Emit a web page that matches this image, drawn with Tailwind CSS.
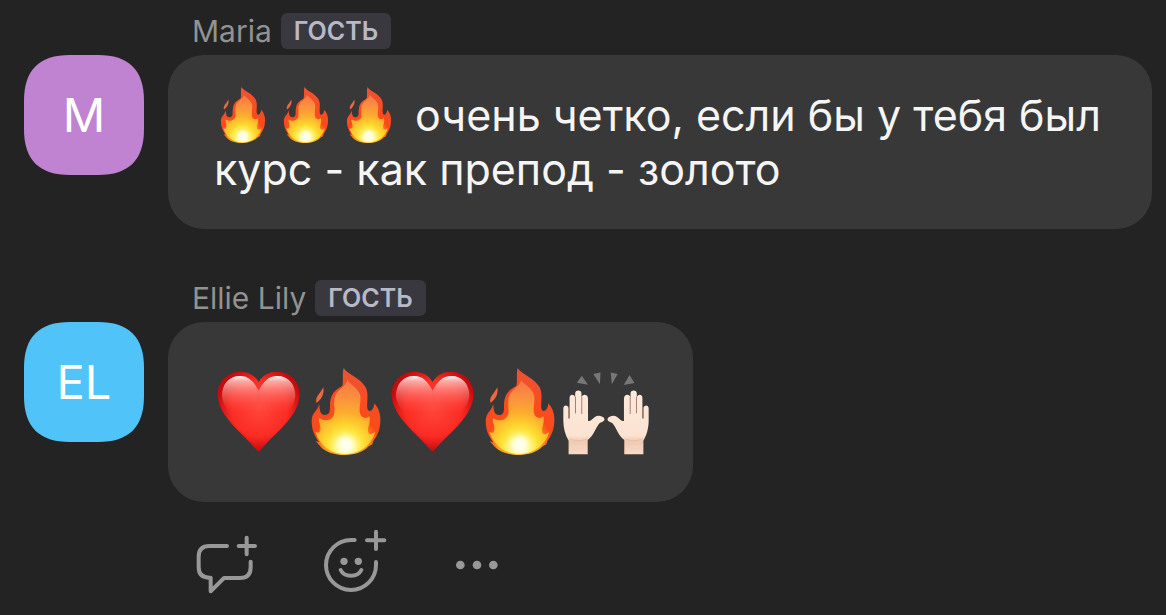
<!DOCTYPE html>
<html lang="ru">
<head>
    <meta charset="UTF-8">
    <meta name="viewport" content="width=device-width, initial-scale=1.0">
    <title>Чат</title>
    <script src="https://cdn.jsdelivr.net/npm/@tailwindcss/browser@4"></script>
</head>
<body class="bg-[#232323] min-h-screen font-[Inter,'Liberation_Sans',sans-serif] text-[#f5f5f5]">

    <!-- Emoji -->
    <svg class="absolute w-0 h-0" aria-hidden="true">
        <defs>
            <radialGradient id="flameOuter" gradientUnits="userSpaceOnUse" cx="437" cy="285" r="220">
                <stop offset="0" stop-color="#ffd83a"/>
                <stop offset=".28" stop-color="#ff9a1c"/>
                <stop offset=".45" stop-color="#fb4a1a"/>
                <stop offset="1" stop-color="#ee5233"/>
            </radialGradient>
            <radialGradient id="flameInner" gradientUnits="userSpaceOnUse" cx="437" cy="290" r="200">
                <stop offset="0" stop-color="#fffff0"/>
                <stop offset=".13" stop-color="#fffb9a"/>
                <stop offset=".28" stop-color="#ffdf30"/>
                <stop offset=".5" stop-color="#fdae2e"/>
                <stop offset=".75" stop-color="#fa8f3f"/>
                <stop offset="1" stop-color="#f67640"/>
            </radialGradient>
            <radialGradient id="heartFill" gradientUnits="userSpaceOnUse" cx="178" cy="175" r="130">
                <stop offset="0" stop-color="#ff463b"/>
                <stop offset=".65" stop-color="#fb2c24"/>
                <stop offset="1" stop-color="#c40a0c"/>
            </radialGradient>
            <linearGradient id="heartShine" x1="0" y1="0" x2="0" y2="1">
                <stop offset="0" stop-color="#fff" stop-opacity=".95"/>
                <stop offset=".15" stop-color="#ffc9c4" stop-opacity=".8"/>
                <stop offset=".5" stop-color="#ff8f86" stop-opacity=".5"/>
                <stop offset="1" stop-color="#ff5045" stop-opacity="0"/>
            </linearGradient>
            <linearGradient id="skin" x1="0" y1="0" x2="0" y2="1">
                <stop offset="0" stop-color="#fdeadb"/>
                <stop offset=".7" stop-color="#fbe3d2"/>
                <stop offset=".8" stop-color="#efcab2"/>
                <stop offset="1" stop-color="#f8dbc7"/>
            </linearGradient>
            <filter id="soft" x="-20%" y="-20%" width="140%" height="140%"><feGaussianBlur stdDeviation="6"/></filter>
            <filter id="edge" x="-10%" y="-10%" width="120%" height="120%"><feGaussianBlur stdDeviation="2"/></filter>
        </defs>
        <symbol id="fire" viewBox="303 54 261 261">
            <path fill="url(#flameOuter)" d="M431 54C444 75 480 82 497 112C507 132 500 155 502 174C503 188 521 187 523 160C536 175 542 191 541 213C540 240 532 258 520 273L517 283L506 289C490 306 464 315 435 315C404 315 377 306 362 290L347 273L358 277C342 257 335 237 335 213C335 187 355 182 357 162C360 168 356 194 374 195C398 195 386 168 392 148C397 126 412 116 427 108C431 92 426 72 431 54Z"/>
            <path fill="#ee6743" d="M370 112C374 134 363 149 350 159C343 143 360 132 370 112Z"/>
            <path fill="url(#flameInner)" filter="url(#edge)" d="M442 90C450 104 473 112 480 134C485 152 476 172 480 190C484 206 500 207 508 199C514 219 499 234 506 250C514 257 520 248 526 246C514 285 482 311 435 312C390 311 359 285 346 245C360 255 365 240 359 222C355 212 356 208 358 204C372 215 396 214 402 194C407 176 398 156 406 136C414 119 438 108 442 90Z"/>
            <ellipse cx="437" cy="284" rx="22" ry="24" fill="#fffff0" opacity=".9" filter="url(#soft)"/>
        </symbol>
        <symbol id="heart" viewBox="42 54 261 261">
            <path fill="url(#heartFill)" d="M176 96C188 74 209 65 233 65C271 66 299 96 299 133C298 201 224 248 182 300Q176 310 170 300C128 248 54 201 53 133C53 96 82 66 119 65C145 65 164 75 176 96Z"/>
            <path fill="url(#heartShine)" filter="url(#edge)" d="M176 122C160 92 144 77 119 78C88 78 66 102 66 137C68 158 78 175 92 190H176Z"/>
            <path fill="url(#heartShine)" filter="url(#edge)" d="M176 122C192 92 208 77 233 78C264 78 286 102 286 137C284 158 274 175 260 190H176Z"/>
        </symbol>
        <symbol id="hand" viewBox="276 54 134 261">
            <path fill="url(#skin)" d="M296 315V273C286 257 280 235 280 212V175C280 163 295 163 296 175V205H299V143C299 131 315 131 316 143V128C317 118 334 118 335 128V142C338 130 354 132 355 144V213C361 216 368 207 376 201C385 194 402 199 405 207C405 216 394 216 389 221C377 236 372 258 354 271V315Z"/>
            <path fill="none" stroke="#a8806c" stroke-width="3" d="M297 170V206M317 140V190M336 140V192"/>
            <path fill="none" stroke="#e2b79c" stroke-width="2" d="M298 268Q325 278 353 268"/>
        </symbol>
        <symbol id="raised" viewBox="276 54 264 261">
            <use href="#hand" x="276" y="54" width="134" height="261"/>
            <g transform="translate(819 0) scale(-1 1)"><use href="#hand" x="276" y="54" width="134" height="261"/></g>
            <path fill="#777" d="M336 76L355 103L321 97ZM371 71L393 66L391 102ZM424 66L445 71L427 102ZM481 74L496 98L463 104Z"/>
        </symbol>
    </svg>

    <main class="flex flex-col gap-[51px] pt-[13px] pl-6 pr-[14px]">

        <article class="flex gap-6">
            <div class="mt-[42px] size-[120px] shrink-0 flex items-center justify-center bg-[#c083d2] text-white text-[47px] [clip-path:path('M0_46C0_15_15_0_46_0H74C105_0_120_15_120_46V74C120_105_105_120_74_120H46C15_120_0_105_0_74Z')]">M</div>
            <div class="flex-1 flex flex-col items-start gap-[6px]">
                <div class="flex items-center gap-[9px] pl-6">
                    <span class="text-[30px] leading-9 text-[#929292]">Maria</span>
                    <span class="h-9 px-[13px] rounded-md bg-[#39383f] text-[25px] leading-9 font-semibold text-[#b9b8c6]">ГОСТЬ</span>
                </div>
                <div class="rounded-[36px] bg-[#383838] py-[33px] pl-[46px] pr-8">
                    <p class="text-[43px] leading-[54px]"><svg class="inline-block size-14 mr-[7px] -my-2 align-[-4px]" role="img" aria-label="🔥"><use href="#fire"/></svg><svg class="inline-block size-14 mr-[7px] -my-2 align-[-4px]" role="img" aria-label="🔥"><use href="#fire"/></svg><svg class="inline-block size-14 mr-[7px] -my-2 align-[-4px]" role="img" aria-label="🔥"><use href="#fire"/></svg> очень четко, если бы у тебя был курс - как препод - золото</p>
                </div>
            </div>
        </article>

        <article class="flex gap-6">
            <div class="mt-[42px] size-[120px] shrink-0 flex items-center justify-center bg-[#50c4f8] text-white text-[47px] [clip-path:path('M0_46C0_15_15_0_46_0H74C105_0_120_15_120_46V74C120_105_105_120_74_120H46C15_120_0_105_0_74Z')]">EL</div>
            <div class="flex-1 flex flex-col items-start gap-[6px]">
                <div class="flex items-center gap-[9px] pl-6">
                    <span class="text-[30px] leading-9 text-[#929292]">Ellie Lily</span>
                    <span class="h-9 px-[13px] rounded-md bg-[#39383f] text-[25px] leading-9 font-semibold text-[#b9b8c6]">ГОСТЬ</span>
                </div>
                <div class="flex rounded-[36px] bg-[#383838] pt-[46px] pb-[47px] pl-[46px] pr-11">
                    <svg class="size-[87px]" role="img" aria-label="❤️"><use href="#heart"/></svg>
                    <svg class="size-[87px]" role="img" aria-label="🔥"><use href="#fire"/></svg>
                    <svg class="size-[87px]" role="img" aria-label="❤️"><use href="#heart"/></svg>
                    <svg class="size-[87px]" role="img" aria-label="🔥"><use href="#fire"/></svg>
                    <svg class="size-[87px]" role="img" aria-label="🙌🏻"><use href="#raised"/></svg>
                </div>
                <div class="flex gap-16 pt-5 pl-[27px] text-[#989898]">
                    <button type="button" aria-label="Ответить">
                        <svg class="w-16 h-[68px]" viewBox="45 24 192 204" fill="none" stroke="currentColor" stroke-width="12" stroke-linecap="round" stroke-linejoin="round">
                            <path d="M141 78H88Q56 78 56 110V141Q56 173 88 173H92V214L132 174H180Q212 174 212 142V125M200 53V103M176 78H225"/>
                        </svg>
                    </button>
                    <button type="button" aria-label="Добавить реакцию">
                        <svg class="w-[66px] h-[68px]" viewBox="39 24 198 204" fill="none" stroke="currentColor" stroke-width="12" stroke-linecap="round">
                            <path d="M134 60H123A75 75 0 1 0 198 135V126M198 35V87M171 61H223M92 150C103 173 143 173 154 150"/>
                            <circle cx="102" cy="124" r="11" fill="currentColor" stroke="none"/>
                            <circle cx="145" cy="124" r="11" fill="currentColor" stroke="none"/>
                        </svg>
                    </button>
                    <button type="button" aria-label="Ещё">
                        <svg class="w-[46px] h-[68px]" viewBox="39 24 138 204" fill="currentColor">
                            <circle cx="61" cy="135" r="13"/>
                            <circle cx="111" cy="135" r="13"/>
                            <circle cx="160" cy="135" r="13"/>
                        </svg>
                    </button>
                </div>
            </div>
        </article>

    </main>
</body>
</html>
